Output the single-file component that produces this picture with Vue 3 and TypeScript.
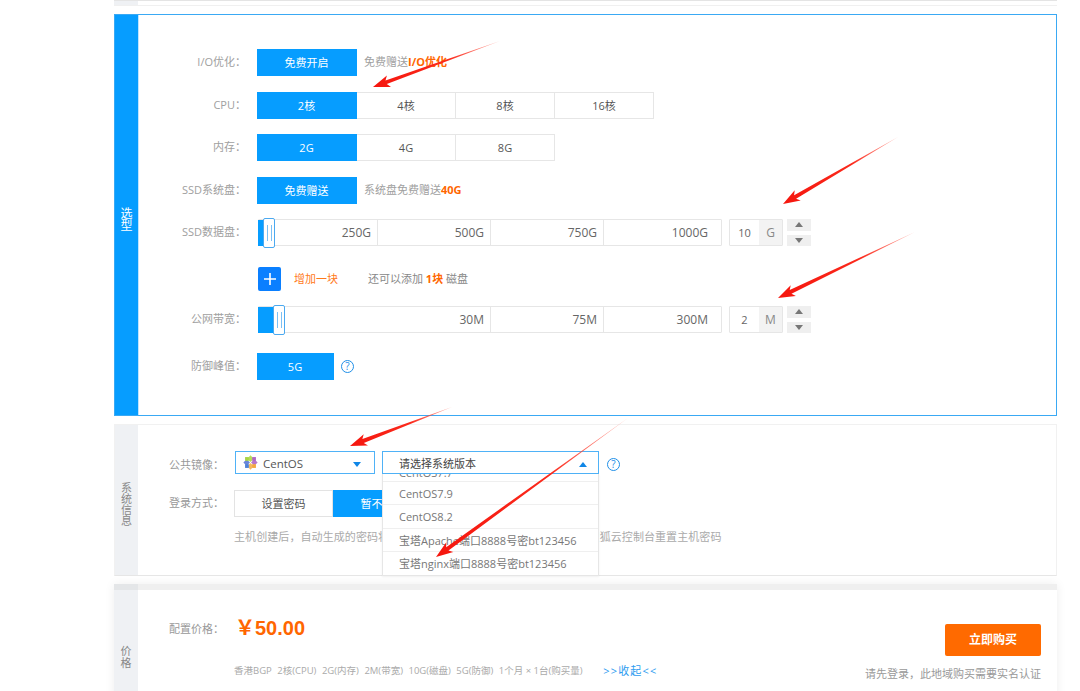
<script setup lang="ts">
type Arrow = { tail: [number, number]; tip: [number, number] };

const arrows: Arrow[] = [
    { tail: [500, 41], tip: [373, 87] },
    { tail: [898, 137], tip: [783, 204] },
    { tail: [915, 232], tip: [778, 298] },
    { tail: [452, 407], tip: [350, 446] },
    { tail: [628, 418], tip: [436, 557] },
];

// long thin wedge with a small barbed head
const arrowPoints = (a: Arrow) => {
    const dx = a.tip[0] - a.tail[0];
    const dy = a.tip[1] - a.tail[1];
    const len = Math.hypot(dx, dy);
    const ux = dx / len;
    const uy = dy / len;
    const at = (back: number, side: number) =>
        `${(a.tip[0] - ux * back - uy * side).toFixed(1)},${(a.tip[1] - uy * back + ux * side).toFixed(1)}`;
    return [
        at(len, 0),
        at(14, 2),
        at(17, 6),
        at(0, 0),
        at(17, -6),
        at(14, -2),
    ].join(" ");
};

const gradientFor = (a: Arrow) => ({
    x1: a.tail[0],
    y1: a.tail[1],
    x2: a.tip[0],
    y2: a.tip[1],
});

const summary = [
    "香港BGP",
    "2核(CPU)",
    "2G(内存)",
    "2M(带宽)",
    "10G(磁盘)",
    "5G(防御)",
    "1个月 × 1台(购买量)",
];
</script>

<template>
    <div class="page">
        <div class="prev-section"><div class="prev-tab"></div></div>

        <section class="pick">
            <div class="pick__tab"><span>选型</span></div>
            <div class="pick__body">
                <div class="row row--io">
                    <div class="label">I/O优化：</div>
                    <div class="btn is-on">免费开启</div>
                    <div class="hint">免费赠送<b>I/O优化</b></div>
                </div>
                <div class="row row--cpu">
                    <div class="label">CPU：</div>
                    <div class="btn is-on">2核</div>
                    <div class="btn">4核</div>
                    <div class="btn">8核</div>
                    <div class="btn">16核</div>
                </div>
                <div class="row row--mem">
                    <div class="label">内存：</div>
                    <div class="btn is-on">2G</div>
                    <div class="btn">4G</div>
                    <div class="btn">8G</div>
                </div>
                <div class="row row--sys">
                    <div class="label">SSD系统盘：</div>
                    <div class="btn is-on">免费赠送</div>
                    <div class="hint">系统盘免费赠送<b>40G</b></div>
                </div>
                <div class="row row--disk">
                    <div class="label">SSD数据盘：</div>
                    <div class="slider">
                        <div class="slider__fill slider__fill--disk"></div>
                        <div class="slider__thumb slider__thumb--disk"><i></i><i></i></div>
                        <div class="tick tick--disk">250G</div>
                        <div class="tick">500G</div>
                        <div class="tick">750G</div>
                        <div class="tick tick--last">1000G</div>
                    </div>
                    <div class="amount">
                        <div class="amount__value">10</div>
                        <div class="amount__unit">G</div>
                    </div>
                    <div class="stepper">
                        <div class="stepper__btn"><span class="tri-up"></span></div>
                        <div class="stepper__btn"><span class="tri-down"></span></div>
                    </div>
                </div>
                <div class="row row--add">
                    <div class="add-btn">
                        <svg viewBox="0 0 24 24" width="24" height="24">
                            <path d="M12 6v12M6 12h12" stroke="#fff" stroke-width="1.6" fill="none" />
                        </svg>
                    </div>
                    <div class="add-text">增加一块</div>
                    <div class="add-note">还可以添加 <b>1块</b> 磁盘</div>
                </div>
                <div class="row row--band">
                    <div class="label">公网带宽：</div>
                    <div class="slider">
                        <div class="slider__fill slider__fill--band"></div>
                        <div class="slider__thumb slider__thumb--band"><i></i><i></i></div>
                        <div class="tick tick--band">30M</div>
                        <div class="tick">75M</div>
                        <div class="tick tick--last">300M</div>
                    </div>
                    <div class="amount">
                        <div class="amount__value">2</div>
                        <div class="amount__unit">M</div>
                    </div>
                    <div class="stepper">
                        <div class="stepper__btn"><span class="tri-up"></span></div>
                        <div class="stepper__btn"><span class="tri-down"></span></div>
                    </div>
                </div>
                <div class="row row--ddos">
                    <div class="label">防御峰值：</div>
                    <div class="btn btn--ddos is-on">5G</div>
                    <div class="help">?</div>
                </div>
            </div>
        </section>

        <section class="sys">
            <div class="side-tab"><span>系统信息</span></div>
            <div class="sys__body">
                <div class="sys-row sys-row--image">
                    <div class="sys-label">公共镜像：</div>
                    <div class="select select--os">
                        <svg class="os-logo" viewBox="0 0 16 16" width="15" height="15">
                            <g transform="rotate(45 8 8)">
                                <rect x="2.6" y="2.6" width="5" height="5" fill="#b5dc5a" />
                                <rect x="8.4" y="2.6" width="5" height="5" fill="#b877c9" />
                                <rect x="2.6" y="8.4" width="5" height="5" fill="#6a86d8" />
                                <rect x="8.4" y="8.4" width="5" height="5" fill="#f4b860" />
                            </g>
                            <rect x="2.2" y="2.2" width="4" height="4" fill="#a8d444" />
                            <rect x="9.8" y="2.2" width="4" height="4" fill="#b066c4" />
                            <rect x="2.2" y="9.8" width="4" height="4" fill="#4f82d8" />
                            <rect x="9.8" y="9.8" width="4" height="4" fill="#f4a840" />
                        </svg>
                        <span class="select__text">CentOS</span>
                        <span class="caret-down"></span>
                    </div>
                    <div class="select-wrap">
                        <div class="select select--ver">
                            <span class="select__text">请选择系统版本</span>
                            <span class="caret-up"></span>
                        </div>
                        <div class="menu">
                            <div class="menu__clip"><span>CentOS7.7</span></div>
                            <div class="menu__item">CentOS7.9</div>
                            <div class="menu__item">CentOS8.2</div>
                            <div class="menu__item">宝塔Apache端口8888号密bt123456</div>
                            <div class="menu__item">宝塔nginx端口8888号密bt123456</div>
                        </div>
                    </div>
                    <div class="help help--sys">?</div>
                </div>
                <div class="sys-row sys-row--login">
                    <div class="sys-label">登录方式：</div>
                    <div class="login-btn">设置密码</div>
                    <div class="login-btn is-on">暂不设置</div>
                </div>
                <div class="sys-note">主机创建后，自动生成的密码将发送至您的站内信和邮箱中，您也可以在搜狐云控制台重置主机密码</div>
            </div>
        </section>

        <section class="price">
            <div class="price__strip"><div class="price__strip-tab"></div></div>
            <div class="price__main">
                <div class="side-tab side-tab--price"><span>价格</span></div>
                <div class="price__body">
                    <div class="price__left">
                        <div class="price__line">
                            <div class="sys-label sys-label--price">配置价格：</div>
                            <div class="price__num">￥50.00</div>
                        </div>
                        <div class="price__summary">
                            <span v-for="item in summary" :key="item">{{ item }}</span>
                            <a class="price__toggle">&gt;&gt;收起&lt;&lt;</a>
                        </div>
                    </div>
                    <div class="price__right">
                        <div class="buy">立即购买</div>
                        <div class="buy-note">请先登录，此地域购买需要实名认证</div>
                    </div>
                </div>
            </div>
        </section>

        <svg class="arrows" viewBox="0 0 1080 691" width="1080" height="691">
            <defs>
                <linearGradient
                    v-for="(a, i) in arrows"
                    :id="`arrow-${i}`"
                    :key="i"
                    gradientUnits="userSpaceOnUse"
                    v-bind="gradientFor(a)"
                >
                    <stop offset="0" stop-color="#ff5a4a" stop-opacity="0.5" />
                    <stop offset="0.4" stop-color="#fb2a1c" />
                    <stop offset="1" stop-color="#f5160e" />
                </linearGradient>
            </defs>
            <polygon
                v-for="(a, i) in arrows"
                :key="i"
                :points="arrowPoints(a)"
                :fill="`url(#arrow-${i})`"
            />
        </svg>
    </div>
</template>

<style>
html,
body {
    margin: 0;
    background: #fff;
    overflow: hidden;
}
</style>

<style scoped>
.page {
    position: relative;
    width: 1080px;
    height: 691px;
    overflow: hidden;
    background: #fff;
    padding-left: 114px;
    box-sizing: border-box;
    font-family: "Open Sans", "Noto Sans CJK SC", sans-serif;
    font-size: 11px;
    color: #666;
}

.prev-section {
    width: 943px;
    height: 6px;
    border-top: 1px solid #e4e4e4;
    border-bottom: 1px solid #f0f0f0;
    box-sizing: border-box;
    margin-bottom: 8px;
}

.prev-tab {
    width: 24px;
    height: 4px;
    background: #eff1f4;
}

.pick {
    display: flex;
    width: 943px;
    height: 402px;
    box-sizing: border-box;
    border: 1px solid #3aa9f4;
}

.pick__tab {
    width: 24px;
    background: #069dff;
    border-right: 1px solid #bfe4ff;
    flex: none;
    display: flex;
    align-items: center;
    justify-content: center;
    color: #fff;
    font-size: 12px;
    line-height: 12.5px;
    padding-top: 10px;
    box-sizing: border-box;
}

.pick__tab span {
    width: 12px;
    text-align: center;
}

.pick__body {
    flex: 1;
    padding-top: 34px;
}

.row {
    display: flex;
    align-items: flex-start;
    height: 28px;
    padding-left: 118px;
    position: relative;
}

.row--cpu {
    margin-top: 15px;
}
.row--mem {
    margin-top: 14px;
}
.row--sys {
    margin-top: 15px;
}
.row--disk {
    margin-top: 14px;
}
.row--add {
    margin-top: 20px;
    height: 24px;
}
.row--band {
    margin-top: 15px;
}
.row--ddos {
    margin-top: 19px;
}

.label {
    position: absolute;
    left: 0;
    top: 4px;
    width: 107px;
    text-align: right;
    color: #a0a0a0;
    font-size: 11px;
}

.btn {
    width: 99px;
    height: 27px;
    line-height: 26px;
    box-sizing: border-box;
    text-align: center;
    border: 1px solid #e6e6e6;
    border-left: none;
    color: #555;
    font-size: 11px;
}

.btn.is-on {
    width: 100px;
    background: #069dff;
    border-color: #069dff;
    color: #fff;
}

.btn--ddos.is-on {
    width: 77px;
}

.hint {
    margin-left: 7px;
    line-height: 26px;
    color: #a0a0a0;
}

.hint b {
    color: #ff6600;
    font-weight: 700;
}

.slider {
    position: relative;
    display: flex;
    width: 464px;
    height: 27px;
    box-sizing: border-box;
    border: 1px solid #e6e6e6;
    border-radius: 1px;
    margin-left: 1px;
}

.slider__fill {
    position: absolute;
    left: -1px;
    top: 0;
    height: 26px;
    background: #069dff;
}

.slider__fill--disk {
    width: 7px;
}

.slider__fill--band {
    width: 20px;
}

.slider__thumb {
    position: absolute;
    top: -2px;
    width: 12px;
    height: 30px;
    box-sizing: border-box;
    background: #fff;
    border: 1px solid #4ba9f0;
    border-radius: 2px;
    display: flex;
    justify-content: center;
    align-items: center;
    gap: 3px;
}

.slider__thumb i {
    width: 1px;
    height: 16px;
    background: #7cc0f4;
}

.slider__thumb--disk {
    left: 4px;
}

.slider__thumb--band {
    left: 14px;
}

.tick {
    width: 113px;
    height: 100%;
    line-height: 26px;
    padding-right: 6px;
    box-sizing: border-box;
    text-align: right;
    border-left: 1px solid #e6e6e6;
    color: #666;
    font-size: 12px;
}

.tick--disk {
    width: 118px;
    border-left: none;
}

.tick--band {
    width: 231px;
    border-left: none;
}

.tick--last {
    flex: 1;
    padding-right: 13px;
}

.amount {
    display: flex;
    margin-left: 7px;
    height: 27px;
    box-sizing: border-box;
    width: 54px;
    border: 1px solid #e6e6e6;
    border-radius: 1px;
    line-height: 25px;
    text-align: center;
    font-size: 11px;
}

.amount__value {
    width: 29px;
}

.amount__unit {
    flex: 1;
    background: #f3f3f3;
    color: #888;
    font-size: 12px;
}

.stepper {
    margin-left: 4px;
    display: flex;
    flex-direction: column;
    gap: 4px;
}

.stepper__btn {
    width: 24px;
    height: 11.5px;
    background: #efefef;
    display: flex;
    align-items: center;
    justify-content: center;
}

.tri-up,
.tri-down {
    width: 0;
    height: 0;
    border-left: 4px solid transparent;
    border-right: 4px solid transparent;
}

.tri-up {
    border-bottom: 5px solid #777;
}

.tri-down {
    border-top: 5px solid #777;
}

.add-btn {
    width: 23px;
    height: 24px;
    background: #0a7fff;
    border-radius: 2px;
    margin-left: 1px;
}

.add-text {
    margin-left: 13px;
    line-height: 24px;
    color: #ff7a1a;
}

.add-note {
    margin-left: 30px;
    line-height: 24px;
    color: #888;
}

.add-note b {
    color: #ff6600;
    font-weight: 700;
}

.help {
    width: 11px;
    height: 11px;
    border: 1px solid #1f8fe8;
    border-radius: 50%;
    color: #1f8fe8;
    text-align: center;
    line-height: 11px;
    font-size: 10px;
    margin: 7px 0 0 7px;
}

.sys {
    display: flex;
    width: 943px;
    height: 152px;
    margin-top: 8px;
    box-sizing: border-box;
    border: 1px solid #f1f1f1;
    border-bottom-color: #e6e6e6;
}

.side-tab {
    width: 23px;
    flex: none;
    background: #eff1f4;
    color: #888;
    font-size: 11px;
    line-height: 11px;
    display: flex;
    align-items: center;
    justify-content: center;
    padding-top: 8px;
    box-sizing: border-box;
}

.side-tab span {
    width: 12px;
    text-align: center;
}

.sys__body {
    flex: 1;
    padding: 26px 0 0 31px;
}

.sys-row {
    display: flex;
    align-items: center;
}

.sys-label {
    width: 66px;
    color: #999;
    font-size: 11px;
    flex: none;
}

.sys-row--image .sys-label {
    padding-top: 2px;
}

.select {
    position: relative;
    height: 21px;
    display: flex;
    align-items: center;
    border: 1px solid #4fb2f7;
    background: #fff;
    color: #555;
    font-size: 11.5px;
}

.select__text {
    padding-top: 1px;
}

.select--os {
    width: 131px;
    padding-left: 7px;
}

.os-logo {
    margin-right: 5px;
    flex: none;
}

.select--ver {
    width: 215px;
    font-size: 11px;
}

.select--ver .select__text {
    margin-left: 16px;
    color: #444;
}

.select-wrap {
    position: relative;
    margin-left: 7px;
    z-index: 2;
}

.caret-down,
.caret-up {
    position: absolute;
    right: 11px;
    top: 10px;
    width: 0;
    height: 0;
    border-left: 4px solid transparent;
    border-right: 4px solid transparent;
}

.caret-down {
    right: 13px;
    border-top: 5px solid #0f86e6;
}

.caret-up {
    border-bottom: 5px solid #0f86e6;
}

.menu {
    position: absolute;
    left: 0;
    top: 23px;
    width: 215px;
    background: #fff;
    border: 1px solid #e6e6e6;
    border-top: none;
    box-shadow: 0 1px 2px rgba(0, 0, 0, 0.06);
}

.menu__clip {
    height: 7px;
    overflow: hidden;
    position: relative;
    border-bottom: 1px solid #efefef;
    color: #777;
    font-size: 11px;
}

.menu__clip span {
    position: absolute;
    left: 16px;
    bottom: 1px;
}

.menu__item {
    height: 22.4px;
    line-height: 24px;
    padding-left: 16px;
    border-bottom: 1px solid #efefef;
    color: #777;
    font-size: 11px;
    white-space: nowrap;
}

.menu__item:last-child {
    border-bottom: none;
}

.help--sys {
    margin: 4px 0 0 8px;
}

.sys-row--login {
    margin-top: 16px;
}

.sys-row--login .sys-label {
    width: 65px;
    margin-bottom: 4px;
}

.login-btn {
    width: 99px;
    height: 27px;
    line-height: 25px;
    box-sizing: border-box;
    border: 1px solid #e3e3e3;
    text-align: center;
    color: #555;
}

.login-btn.is-on {
    background: #069dff;
    border-color: #069dff;
    color: #fff;
}

.sys-note {
    margin: 12px 0 0 65px;
    color: #aaa;
    line-height: 16px;
    letter-spacing: 0.08px;
    white-space: nowrap;
}

.price {
    width: 943px;
    margin-top: 8px;
    box-shadow: 0 0 10px rgba(0, 0, 0, 0.07);
}

.price__strip {
    height: 6px;
    background: #efefef;
}

.price__strip-tab {
    width: 24px;
    height: 6px;
    background: #e4e6e8;
}

.price__main {
    display: flex;
    height: 110px;
    background: #fff;
}

.side-tab--price {
    width: 24px;
    padding-top: 24px;
    line-height: 12px;
}

.price__body {
    flex: 1;
    display: flex;
    justify-content: space-between;
    padding: 23px 16px 0 31px;
}

.price__line {
    display: flex;
    align-items: center;
}

.sys-label--price {
    width: 66px;
}

.price__num {
    color: #ff6600;
    font-family: "Liberation Sans", "Noto Sans CJK SC", sans-serif;
    font-size: 20px;
    font-weight: 700;
    line-height: 30px;
}

.price__summary {
    margin: 21px 0 0 65px;
    display: flex;
    gap: 5.5px;
    color: #aaa;
    font-size: 9.5px;
    line-height: 14px;
    white-space: nowrap;
}

.price__toggle {
    margin-left: 15px;
    color: #2d9cf0;
    font-size: 11px;
    letter-spacing: 1.2px;
}

.price__right {
    display: flex;
    flex-direction: column;
    align-items: flex-end;
    padding-top: 11px;
}

.buy {
    width: 96px;
    height: 32px;
    line-height: 32px;
    text-align: center;
    background: #ff6a00;
    color: #fff;
    border-radius: 2px;
    font-size: 12px;
    font-weight: 700;
}

.buy-note {
    margin-top: 9px;
    color: #999;
    font-size: 11px;
    white-space: nowrap;
}

.arrows {
    position: absolute;
    left: 0;
    top: 0;
    pointer-events: none;
    z-index: 5;
}
</style>
